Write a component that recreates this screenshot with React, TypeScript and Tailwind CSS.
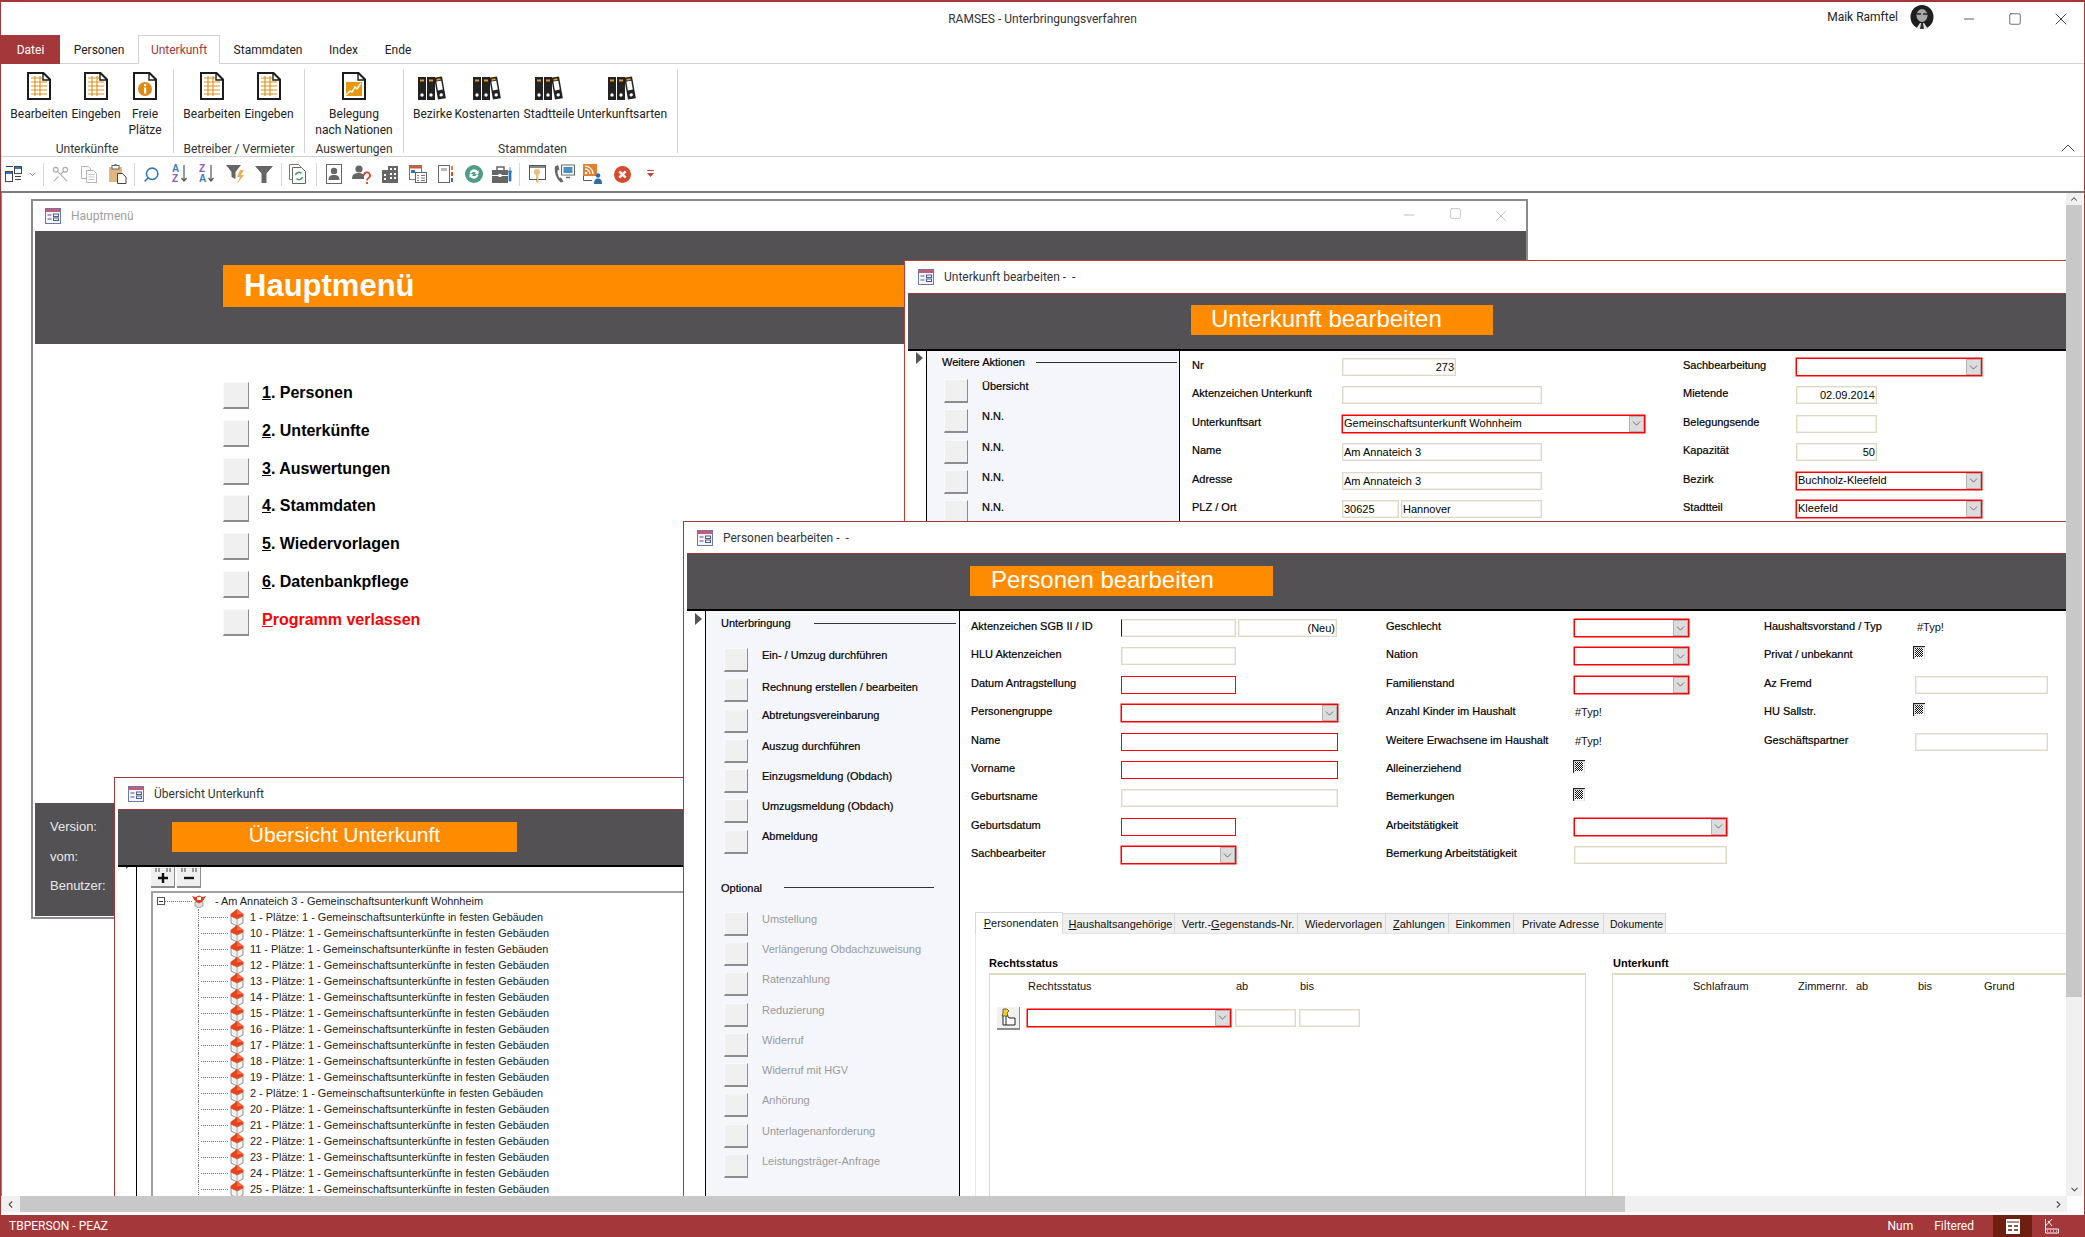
import type { ReactNode } from 'react';
import { ChevronDown, ChevronLeft, ChevronRight, ChevronUp, Minus, Scissors, Search, Square, X } from 'lucide-react';

// ---------- ribbon icons ----------
function Doc({ children }: { children?: ReactNode }) {
  return (
    <svg width="24" height="28" viewBox="0 0 24 28">
      <path d="M1 1h15.5L23 7.5V27H1z" fill="#fff" stroke="#1c1c1c" strokeWidth="2" />
      {children}
      <path d="M16 1v7h7z" fill="#fff" stroke="#1c1c1c" strokeWidth="1.4" />
    </svg>
  );
}

function DocLines() {
  return (
    <Doc>
      <path d="M4 6h11M4 10h16M4 14h16M4 18h16M4 22h16M8 4v20M13 4v20" stroke="#e08e1a" strokeWidth="1.1" fill="none" />
    </Doc>
  );
}

function DocInfo() {
  return (
    <Doc>
      <circle cx="12" cy="17" r="7" fill="#e08a12" />
      <rect x="11" y="15.5" width="2.2" height="6" fill="#fff" />
      <rect x="11" y="12" width="2.2" height="2.2" fill="#fff" />
    </Doc>
  );
}

function DocChart() {
  return (
    <Doc>
      <rect x="4" y="10" width="16" height="14" fill="#e8980f" />
      <path d="M4 23l4-4 2 1 3-5 2 2 4-6" stroke="#fff" strokeWidth="1.4" fill="none" />
    </Doc>
  );
}

function Binders() {
  return (
    <svg width="30" height="24" viewBox="0 0 30 24" className="ml-[1px]">
      <rect x="0" y="1" width="8" height="23" fill="#222" />
      <rect x="9" y="1" width="8" height="23" fill="#222" />
      <rect x="2" y="3.5" width="4" height="2" fill="#e89a1c" />
      <rect x="11" y="3.5" width="4" height="2" fill="#e89a1c" />
      <circle cx="4" cy="19" r="1.7" fill="#fff" />
      <circle cx="13" cy="19" r="1.7" fill="#fff" />
      <g transform="rotate(-10 22 12)">
        <rect x="18" y="1" width="8" height="22" fill="#222" />
        <rect x="19.5" y="5" width="5" height="9" fill="#fff" />
        <rect x="20" y="2.5" width="4" height="1.8" fill="#e89a1c" />
        <circle cx="22" cy="19" r="1.7" fill="#fff" />
      </g>
    </svg>
  );
}

function WinIcon() {
  return (
    <svg width="16" height="16" viewBox="0 0 16 16" className="shrink-0">
      <rect x="0.5" y="0.5" width="15" height="15" fill="#f4f6fc" stroke="#6b78a8" />
      <rect x="1" y="1" width="14" height="3" fill="#c65a78" />
      <path d="M2.5 7h4M2.5 11h4" stroke="#4a5a90" />
      <rect x="8.5" y="6" width="5" height="2.5" fill="none" stroke="#4a5a90" />
      <rect x="8.5" y="10" width="5" height="2.5" fill="none" stroke="#4a5a90" />
    </svg>
  );
}

function House() {
  return (
    <svg width="14" height="17" viewBox="0 0 14 17" className="shrink-0">
      <path d="M1 7v7l6 3 6-3V7l-6 3z" fill="#f2f2f2" stroke="#777" strokeWidth="0.8" />
      <path d="M7 10v7" stroke="#999" strokeWidth="0.8" />
      <path d="M7 0L13.5 5V7L7 10 0.5 7V5z" fill="#e9431c" />
      <path d="M7 0V5l6.5 0z" fill="#f0704a" />
    </svg>
  );
}

function RootHouse() {
  return (
    <svg width="14" height="14" viewBox="0 0 14 14" className="shrink-0">
      <path d="M3 8v4l4 2 4-2V8z" fill="#ddd" stroke="#888" strokeWidth="0.7" />
      <path d="M0 2l3.5 1L7 1.5 10.5 3 14 2 11 7 7 9.5 3 7z" fill="#e03c20" />
      <path d="M5 3h4v3H5z" fill="#fff" />
    </svg>
  );
}

function Check() {
  return (
    <svg width="12" height="13" viewBox="0 0 12 13" className="shrink-0 -ml-[1px] -mt-[1px]">
      <pattern id="chk" width="2" height="2" patternUnits="userSpaceOnUse">
        <rect width="2" height="2" fill="#fff" />
        <rect width="1" height="1" fill="#111" />
        <rect x="1" y="1" width="1" height="1" fill="#111" />
      </pattern>
      <rect x="2" y="2" width="8" height="9" fill="url(#chk)" />
      <path d="M0.5 13V0.5H12" stroke="#222" fill="none" strokeWidth="1.3" />
      <path d="M11.5 1v12H1" stroke="#ddd" fill="none" />
    </svg>
  );
}

function PlusMinus({ plus }: { plus?: boolean }) {
  return (
    <svg width="22" height="20" viewBox="0 0 22 20">
      <path d="M4 2v4M7 2v4M15 2v4M18 2v4" stroke="#444" strokeWidth="1" />
      <path d={plus ? 'M6 12h10M11 7v10' : 'M6 12h10'} stroke="#111" strokeWidth="2.4" />
    </svg>
  );
}

// ---------- quick access toolbar icons ----------
const QI = {
  layout: (
    <svg width="17" height="16" viewBox="0 0 17 16">
      <rect x="0.5" y="5.5" width="7" height="10" fill="#fff" stroke="#444" />
      <rect x="9.5" y="0.5" width="7" height="7" fill="#fff" stroke="#444" />
      <path d="M1 0.5h7M10 10.5h6M10 13.5h6" stroke="#444" />
      <rect x="1" y="6" width="6" height="2" fill="#2f78b8" />
      <rect x="10" y="1" width="6" height="2" fill="#2f78b8" />
    </svg>
  ),
  copy: (
    <svg width="16" height="17" viewBox="0 0 16 17">
      <path d="M0.5 0.5h7l2 2v10h-9z" fill="#fff" stroke="#b4b4b4" />
      <path d="M5.5 4.5h7l3 3v9h-10z" fill="#fff" stroke="#b4b4b4" />
      <path d="M7.5 8.5h6M7.5 11h6M7.5 13.5h6" stroke="#c4c4c4" />
    </svg>
  ),
  paste: (
    <svg width="18" height="20" viewBox="0 0 18 20">
      <rect x="0" y="3" width="13" height="15" fill="#e3b77c" />
      <rect x="3" y="1.5" width="7" height="3.5" fill="#fff" stroke="#666" />
      <rect x="5.5" y="0" width="2" height="2" fill="#666" />
      <path d="M8.5 9.5h5l3.5 3.5v6.5H8.5z" fill="#fff" stroke="#444" />
    </svg>
  ),
  filterBolt: (
    <svg width="20" height="22" viewBox="0 0 20 22">
      <path d="M0 2h15l-5.5 7v7l-4-2V9z" fill="#666" />
      <path d="M14 7l-3 7h3l-3 7 7-9h-3l3-5z" fill="#eeb155" />
    </svg>
  ),
  funnel: (
    <svg width="18" height="18" viewBox="0 0 18 18">
      <path d="M0 1h18l-6.5 7.5V18h-5V8.5z" fill="#666" />
    </svg>
  ),
  refreshDoc: (
    <svg width="18" height="20" viewBox="0 0 18 20">
      <path d="M0.5 0.5h9l2 2v2" fill="none" stroke="#777" />
      <path d="M0.5 0.5v15h3" fill="none" stroke="#777" />
      <path d="M3.5 3.5h9l4 4v12h-13z" fill="#fff" stroke="#666" />
      <path d="M6.5 11a3.5 3.5 0 0 1 6-1.5M13.5 13a3.5 3.5 0 0 1-6 1.5" stroke="#3d9a70" strokeWidth="1.6" fill="none" />
    </svg>
  ),
  person: (
    <svg width="16" height="20" viewBox="0 0 16 20">
      <rect x="0.5" y="0.5" width="15" height="19" fill="#fff" stroke="#666" />
      <circle cx="8" cy="7" r="3.2" fill="#666" />
      <path d="M2.5 16c0-4 2-5 5.5-5s5.5 1 5.5 5z" fill="#666" />
    </svg>
  ),
  personQ: (
    <svg width="20" height="20" viewBox="0 0 20 20">
      <circle cx="7" cy="5" r="3.6" fill="#666" />
      <path d="M0 15c0-4 2-6 7-6 3 0 4 1 5 2v4z" fill="#666" />
      <path d="M12 11.5a3 3 0 1 1 4.5 2.5c-1 .6-1.5 1-1.5 2.5M15 18v2" stroke="#d8442c" strokeWidth="1.8" fill="none" />
    </svg>
  ),
  building: (
    <svg width="16" height="17" viewBox="0 0 16 17">
      <rect x="0" y="4" width="16" height="13" fill="#666" />
      <rect x="6" y="0" width="10" height="6" fill="#666" />
      <path d="M8 2h2v2H8zM12 2h2v2h-2zM8 7h2v2H8zM12 7h2v2h-2zM8 11h2v2H8zM12 11h2v2h-2zM2 8h2v2H2zM2 12h2v2H2z" fill="#fff" />
    </svg>
  ),
  forms: (
    <svg width="18" height="18" viewBox="0 0 18 18">
      <rect x="0.5" y="0.5" width="12" height="14" fill="#fff" stroke="#777" />
      <rect x="1" y="1" width="11" height="2.5" fill="#d9582c" />
      <rect x="2" y="5" width="4" height="3" fill="#2f78b8" />
      <rect x="6.5" y="7.5" width="11" height="10" fill="#fff" stroke="#666" />
      <path d="M8 10.5h2M12 10.5h4M8 13h2M12 13h4M8 15.5h2M12 15.5h4" stroke="#777" />
    </svg>
  ),
  docSide: (
    <svg width="15" height="18" viewBox="0 0 15 18">
      <rect x="0.5" y="0.5" width="11" height="17" fill="#fff" stroke="#666" />
      <rect x="3" y="3" width="6" height="3" fill="#bbb" />
      <rect x="13" y="1" width="2" height="4" fill="#e0832a" />
      <rect x="13" y="7" width="2" height="4" fill="#d94a2a" />
      <rect x="13" y="13" width="2" height="4" fill="#2f78b8" />
    </svg>
  ),
  refresh: (
    <svg width="18" height="18" viewBox="0 0 18 18">
      <circle cx="9" cy="9" r="9" fill="#4d9c84" />
      <path d="M4.5 8a4.6 4.6 0 0 1 8-2l1-1v4h-4l1.5-1.2a2.8 2.8 0 0 0-4.7 1M13.5 10a4.6 4.6 0 0 1-8 2l-1 1V9h4l-1.5 1.2a2.8 2.8 0 0 0 4.7-1" fill="#fff" />
    </svg>
  ),
  briefcase: (
    <svg width="20" height="17" viewBox="0 0 20 17">
      <path d="M5 4V1h7v3" fill="none" stroke="#666" strokeWidth="1.5" />
      <rect x="0" y="4" width="16" height="13" fill="#666" />
      <rect x="0" y="9" width="16" height="1" fill="#fff" />
      <rect x="6.5" y="8" width="3" height="3" fill="#fff" />
      <path d="M18 1v4M16.5 5h3l-.5 2v8h-2V7z" fill="#2f78b8" stroke="#2f78b8" strokeWidth="0.8" />
    </svg>
  ),
  key: (
    <svg width="17" height="18" viewBox="0 0 17 18">
      <rect x="0.5" y="0.5" width="16" height="14" fill="#fff" stroke="#555" />
      <rect x="1" y="1" width="15" height="2" fill="#888" />
      <circle cx="8" cy="7" r="3" fill="#eebd7a" />
      <path d="M7 9h2.4v9H8l-1-1v-2h1v-1H7z" fill="#eebd7a" />
    </svg>
  ),
  phone: (
    <svg width="21" height="20" viewBox="0 0 21 20">
      <path d="M4 1L1 2.5C0 8 2 15 7 18.5L9.5 17.5 7 13.5 5.5 14C4 11.5 3.5 9 3.5 6.5L5.5 5.5z" fill="#666" />
      <rect x="7.5" y="1" width="13" height="10" fill="#fff" stroke="#666" />
      <rect x="9.5" y="3" width="9" height="6" fill="#4a90c8" />
      <path d="M12 13.5h4" stroke="#666" strokeWidth="1.4" />
    </svg>
  ),
  rss: (
    <svg width="20" height="20" viewBox="0 0 20 20">
      <rect x="0" y="0" width="14" height="12" fill="#e57f2e" />
      <circle cx="3" cy="9" r="1.3" fill="#fff" />
      <path d="M2 5a5 5 0 0 1 5 5M2 2a8 8 0 0 1 8 8" stroke="#fff" strokeWidth="1.3" fill="none" />
      <path d="M0.5 12v4.5H9" stroke="#555" fill="none" />
      <circle cx="15" cy="11.5" r="2.3" fill="#2f6da8" />
      <path d="M11 20c0-4 1.5-5.5 4-5.5s4 1.5 4 5.5z" fill="#2f6da8" />
    </svg>
  ),
  close: (
    <svg width="17" height="17" viewBox="0 0 17 17">
      <circle cx="8.5" cy="8.5" r="8.5" fill="#d8492d" />
      <path d="M5.3 5.3l6.4 6.4M11.7 5.3l-6.4 6.4" stroke="#fff" strokeWidth="2.4" />
    </svg>
  ),
  drop: (
    <svg width="7" height="8" viewBox="0 0 7 8">
      <path d="M0 0.5h7" stroke="#c9413c" />
      <path d="M0 3h7L3.5 7z" fill="#c9413c" />
    </svg>
  ),
};

function Sort({ first, second }: { first: ReactNode; second: ReactNode }) {
  return (
    <div className="flex w-[16px] h-[20px] font-['Liberation_Sans',sans-serif] text-[10px] font-bold leading-[10px]">
      <div className="flex flex-col">
        {first}
        {second}
      </div>
      <svg width="6" height="18" viewBox="0 0 6 18" className="ml-[2px]">
        <path d="M3 1v16M0.5 14L3 17l2.5-3" stroke="#555" fill="none" strokeWidth="1.2" />
      </svg>
    </div>
  );
}

function Q({ className, children }: { className: string; children?: ReactNode }) {
  return <div className={`h-full flex items-center justify-center shrink-0 ${className}`}>{children}</div>;
}

function QSep({ className }: { className: string }) {
  return (
    <div className={`h-full flex items-center justify-center shrink-0 ${className}`}>
      <div className="w-px h-[23px] bg-[#d8d8d8]" />
    </div>
  );
}

// ---------- ribbon ----------
function RibbonBtn({ className, icon, children }: { className: string; icon: ReactNode; children: ReactNode }) {
  return (
    <div className={`flex flex-col items-center shrink-0 ${className}`}>
      <div className="h-[27px] flex items-end">{icon}</div>
      <div className="mt-[6px] text-center leading-[16px] whitespace-nowrap text-[#222]">{children}</div>
    </div>
  );
}

function Group({ className, label, labelClass, children }: { className: string; label: string; labelClass?: string; children: ReactNode }) {
  return (
    <div className={`mt-[5px] h-[84px] flex flex-col border-r border-[#d4d4d4] shrink-0 ${className}`}>
      <div className="flex-1 flex pl-[10px] pt-[4px]">{children}</div>
      <div className={`h-[16px] leading-[16px] text-center -mb-[4px] text-[#333] ${labelClass ?? ''}`}>{label}</div>
    </div>
  );
}

// ---------- access form parts ----------
function AccessBtn({ className }: { className: string }) {
  return <div className={`shrink-0 bg-[#f0f0f0] border-t border-l border-t-[#fafafa] border-l-[#fafafa] border-r border-r-[#8c8c8c] border-b-2 border-b-[#8c8c8c] ${className}`} />;
}

function Input({ className, red, right, children }: { className: string; red?: boolean; right?: boolean; children?: ReactNode }) {
  return (
    <div className={`h-[18px] shrink-0 border leading-[16px] px-[1px] text-[11px] text-black whitespace-nowrap overflow-hidden ${red ? 'border-[#ff0000]' : 'border-[#dcdac4] shadow-[inset_0_0_0_0.5px_#e6e4d4]'} ${right ? 'text-right' : ''} ${className}`}>
      {children}
    </div>
  );
}

function Combo({ className, children }: { className: string; children?: ReactNode }) {
  return (
    <div className={`h-[18px] shrink-0 border border-[#ff0000] shadow-[0_0_0_0.5px_#ff0000] flex items-stretch text-[11px] text-black leading-[15px] ${className}`}>
      <div className="flex-1 pl-[1px] whitespace-nowrap overflow-hidden">{children}</div>
      <div className="w-[15px] bg-[#dcdcdc] border border-[#b4b4b4] flex items-center justify-center">
        <ChevronDown size={13} strokeWidth={1.3} color="#444" />
      </div>
    </div>
  );
}

const LABEL = 'text-black [-webkit-text-stroke:0.2px_#000]';

function Row({ label, labelClass, children }: { label: string; labelClass: string; children?: ReactNode }) {
  return (
    <div className="flex h-[28.4px]">
      <div className={`shrink-0 leading-[15px] whitespace-nowrap ${LABEL} ${labelClass}`}>{label}</div>
      {children}
    </div>
  );
}

function SideRow({ label, muted, labelClass }: { label: string; muted?: boolean; labelClass?: string }) {
  return (
    <div className="flex h-[30.25px]">
      <AccessBtn className="w-[24px] h-[24px]" />
      <div className={`ml-[14px] leading-[14px] whitespace-nowrap ${muted ? 'text-[#9a9a9a]' : LABEL} ${labelClass ?? ''}`}>{label}</div>
    </div>
  );
}

function Triangle() {
  return (
    <svg width="7" height="12" viewBox="0 0 7 12">
      <path d="M0 0l7 6-7 6z" fill="#555" />
    </svg>
  );
}

function TitleBar({ title, muted, className }: { title: string; muted?: boolean; className: string }) {
  return (
    <div className={`flex items-center font-[Roboto,sans-serif] text-[12px] shrink-0 ${muted ? 'text-[#9e9e9e]' : 'text-[#333]'} ${className}`}>
      <WinIcon />
      <span className="ml-[10px] whitespace-pre">{title}</span>
    </div>
  );
}

function Tab({ className, children }: { className: string; children: ReactNode }) {
  return (
    <div className={`h-[20px] shrink-0 bg-[#f0f0f0] border-r border-t border-[#d8d8d8] text-center leading-[21px] whitespace-nowrap pl-[4px] ${className}`}>
      {children}
    </div>
  );
}

const treeRows = ['1', '10', '11', '12', '13', '14', '15', '16', '17', '18', '19', '2', '20', '21', '22', '23', '24', '25'];

export default function App() {
  return (
    <div className="w-[2085px] h-[1237px] overflow-hidden bg-white flex flex-col border-x border-t-2 border-[#a4373a] font-[Roboto,sans-serif] text-[12px] text-[#222]">
      {/* title */}
      <div className="h-[33px] shrink-0 grid grid-cols-[1fr_auto_1fr] items-center">
        <div />
        <div className="text-[#333] mt-[1px]">RAMSES - Unterbringungsverfahren</div>
        <div className="flex items-center justify-end h-full">
          <span className="text-[#222] -mt-[3px]">Maik Ramftel</span>
          <svg width="24" height="24" viewBox="0 0 24 24" className="ml-[12px] mr-[12px] -mt-[3px]">
            <ellipse cx="12" cy="12" rx="11.5" ry="12" fill="#1f1f1f" />
            <ellipse cx="12" cy="10.5" rx="5.5" ry="6.5" fill="#a8a8a8" />
            <path d="M7 9h4M13 9h4" stroke="#222" strokeWidth="1.4" />
            <path d="M6 24l4-6h4l4 6z" fill="#e6e6e6" />
            <path d="M11 18h2l1 6h-4z" fill="#333" />
          </svg>
          <div className="w-[46px] flex justify-center"><Minus size={16} strokeWidth={1.1} /></div>
          <div className="w-[46px] flex justify-center"><Square size={14} strokeWidth={1.1} /></div>
          <div className="w-[46px] flex justify-center"><X size={20} strokeWidth={1} /></div>
        </div>
      </div>

      {/* ribbon tabs */}
      <div className="h-[29px] shrink-0 flex border-b border-[#d2d2d2] leading-[31px] text-center">
        <div className="w-[59px] h-[29px] bg-[#a4373a] text-white">Datei</div>
        <div className="w-[78px]">Personen</div>
        <div className="w-[82px] h-[29px] bg-white border-x border-t border-[#d2d2d2] text-[#a4373a] leading-[29px]">Unterkunft</div>
        <div className="w-[96px]">Stammdaten</div>
        <div className="w-[55px]">Index</div>
        <div className="w-[54px]">Ende</div>
      </div>

      {/* ribbon */}
      <div className="h-[93px] shrink-0 flex border-b border-[#d2d2d2]">
        <Group className="w-[173px]" label="Unterkünfte">
          <RibbonBtn className="w-[56px]" icon={<DocLines />}>Bearbeiten</RibbonBtn>
          <RibbonBtn className="w-[58px]" icon={<DocLines />}>Eingeben</RibbonBtn>
          <RibbonBtn className="w-[40px]" icon={<DocInfo />}>Freie<br />Plätze</RibbonBtn>
        </Group>
        <Group className="w-[131px]" label="Betreiber / Vermieter">
          <RibbonBtn className="w-[56px]" icon={<DocLines />}>Bearbeiten</RibbonBtn>
          <RibbonBtn className="w-[58px]" icon={<DocLines />}>Eingeben</RibbonBtn>
        </Group>
        <Group className="w-[99px]" label="Auswertungen">
          <RibbonBtn className="w-[78px]" icon={<DocChart />}>Belegung<br />nach Nationen</RibbonBtn>
        </Group>
        <Group className="w-[274px]" label="Stammdaten" labelClass="pr-[16px]">
          <RibbonBtn className="w-[37px]" icon={<Binders />}>Bezirke</RibbonBtn>
          <RibbonBtn className="w-[72px]" icon={<Binders />}>Kostenarten</RibbonBtn>
          <RibbonBtn className="w-[52px]" icon={<Binders />}>Stadtteile</RibbonBtn>
          <RibbonBtn className="w-[94px]" icon={<Binders />}>Unterkunftsarten</RibbonBtn>
        </Group>
        <div className="ml-auto mr-[4px] mt-[72px]"><ChevronUp size={24} strokeWidth={1} color="#444" /></div>
      </div>

      {/* quick access toolbar */}
      <div className="h-[34px] shrink-0 flex items-center">
        <Q className="w-[24px]">{QI.layout}</Q>
        <Q className="w-[14px]"><ChevronDown size={9} strokeWidth={2} color="#555" /></Q>
        <QSep className="w-[8px]" />
        <Q className="w-[27px]"><Scissors size={19} strokeWidth={1.4} color="#aaa" className="rotate-90" /></Q>
        <Q className="w-[29px]">{QI.copy}</Q>
        <Q className="w-[30px]">{QI.paste}</Q>
        <QSep className="w-[2px]" />
        <Q className="w-[32px]"><Search size={17} strokeWidth={2.2} color="#2f78b8" className="-scale-x-100" /></Q>
        <Q className="w-[26px]"><Sort first={<span className="text-[#3a80c0]">A</span>} second={<span className="text-[#8a5ab8]">Z</span>} /></Q>
        <Q className="w-[28px]"><Sort first={<span className="text-[#8a5ab8]">Z</span>} second={<span className="text-[#3a80c0]">A</span>} /></Q>
        <Q className="w-[29px]">{QI.filterBolt}</Q>
        <Q className="w-[28px]">{QI.funnel}</Q>
        <QSep className="w-[6px]" />
        <Q className="w-[28px]">{QI.refreshDoc}</Q>
        <QSep className="w-[8px]" />
        <Q className="w-[28px]">{QI.person}</Q>
        <Q className="w-[27px]">{QI.personQ}</Q>
        <Q className="w-[29px]">{QI.building}</Q>
        <Q className="w-[28px]">{QI.forms}</Q>
        <Q className="w-[27px]">{QI.docSide}</Q>
        <Q className="w-[30px]">{QI.refresh}</Q>
        <Q className="w-[26px]">{QI.briefcase}</Q>
        <QSep className="w-[8px]" />
        <Q className="w-[28px]">{QI.key}</Q>
        <Q className="w-[27px]">{QI.phone}</Q>
        <Q className="w-[30px]">{QI.rss}</Q>
        <Q className="w-[28px]">{QI.close}</Q>
        <Q className="w-[28px]">{QI.drop}</Q>
      </div>

      {/* mdi area */}
      <div className="h-[1021px] shrink-0 flex flex-col border-t-2 border-[#7c7c7c]">
        <div className="flex h-[1003px] shrink-0">
          <div className="relative w-[2065px] shrink-0 overflow-hidden border-l border-[#8a8a8a] font-['Liberation_Sans',Arial,sans-serif] text-[11px] text-[#111]">
            {/* Hauptmenü */}
            <div className="absolute left-[29px] top-[6px] w-[1497px] h-[720px] bg-white border-2 border-[#8a8a8a] flex flex-col">
              <div className="relative flex items-center">
                <TitleBar title="Hauptmenü" muted className="h-[30px] pl-[12px] flex-1" />
                <div className="flex text-[#a4a4a4] mr-[2px]">
                  <div className="w-[46px] flex justify-center"><Minus size={16} strokeWidth={1.1} /></div>
                  <div className="w-[46px] flex justify-center"><Square size={13} strokeWidth={1.1} /></div>
                  <div className="w-[46px] flex justify-center"><X size={18} strokeWidth={1} /></div>
                </div>
              </div>
              <div className="ml-[2px] h-[113px] shrink-0 bg-[#545154] pl-[188px] pt-[34px]">
                <div className="w-[1000px] h-[42px] bg-[#ff8c00] pl-[21px] text-[31px] leading-[41px] font-bold text-white">Hauptmenü</div>
              </div>
              <div className="ml-[190px] mt-[38px] flex flex-col text-[16px] font-bold leading-[22px] text-black">
                {[['1', '. Personen'], ['2', '. Unterkünfte'], ['3', '. Auswertungen'], ['4', '. Stammdaten'], ['5', '. Wiedervorlagen'], ['6', '. Datenbankpflege']].map(([k, t]) => (
                  <div key={k} className="flex h-[37.75px]">
                    <AccessBtn className="w-[26px] h-[27px]" />
                    <div className="ml-[13px]"><span className="underline">{k}</span>{t}</div>
                  </div>
                ))}
                <div className="flex h-[37.75px]">
                  <AccessBtn className="w-[26px] h-[27px]" />
                  <div className="ml-[13px] text-[#ff0000]"><span className="underline">P</span>rogramm verlassen</div>
                </div>
              </div>
              <div className="mt-auto ml-[2px] mb-px h-[113px] shrink-0 bg-[#545154] pl-[15px] pt-[15px] text-[13px] text-[#e8e8e8]">
                <div className="h-[29.5px] leading-[18px]">Version:</div>
                <div className="h-[29.5px] leading-[18px]">vom:</div>
                <div className="h-[29.5px] leading-[18px]">Benutzer:</div>
              </div>
            </div>

            {/* Übersicht Unterkunft */}
            <div className="absolute isolate left-[112px] top-[584px] w-[600px] h-[500px] bg-white border border-[#a4373a] flex flex-col">
              <TitleBar title="Übersicht Unterkunft" className="h-[31px] pl-[13px]" />
              <div className="relative z-10 ml-[3px] h-[58px] shrink-0 bg-[#545154] border-t border-[#a4373a] border-b-2 border-b-black pl-[54px] pt-[12px]">
                <div className="w-[345px] h-[30px] bg-[#ff8c00] text-center text-[21px] leading-[26px] text-white">Übersicht Unterkunft</div>
              </div>
              <div className="flex flex-1 ml-[3px] -mt-[2px]">
                <div className="w-[18px] pl-[8px] shrink-0 -mt-[8px]"><Triangle /></div>
                <div className="flex-1 border-l border-black pl-[14px]">
                  <div className="flex h-[23px]">
                    <div className="w-[24px] h-[23px] bg-[#f0f0f0] border-r border-b-2 border-[#8c8c8c] flex items-center justify-center"><PlusMinus plus /></div>
                    <div className="ml-[2px] w-[24px] h-[23px] bg-[#f0f0f0] border-r border-b-2 border-[#8c8c8c] flex items-center justify-center"><PlusMinus /></div>
                  </div>
                  <div className="mt-[3px] h-[400px] border-t-2 border-l-2 border-[#a0a0a0] text-[10.9px] text-[#222]">
                    <div className="flex items-center h-[16px]">
                      <div className="ml-[4px] w-[8px] h-[8px] border border-[#555] flex items-center justify-center shrink-0"><div className="w-[4px] h-px bg-[#333]" /></div>
                      <div className="w-[27px] border-t border-dotted border-[#777]" />
                      <RootHouse />
                      <span className="ml-[9px] whitespace-nowrap">- Am Annateich 3 - Gemeinschaftsunterkunft Wohnheim</span>
                    </div>
                    {treeRows.map((n) => (
                      <div key={n} className="flex items-center h-[16px] ml-[45px] border-l border-dotted border-[#777]">
                        <div className="ml-[2px] w-[27px] border-t border-dotted border-[#777]" />
                        <div className="ml-[2px]"><House /></div>
                        <span className="ml-[6px] whitespace-nowrap">{n} - Plätze: 1 - Gemeinschaftsunterkünfte in festen Gebäuden</span>
                      </div>
                    ))}
                  </div>
                </div>
              </div>
            </div>

            {/* Unterkunft bearbeiten */}
            <div className="absolute left-[902px] top-[67px] w-[1200px] h-[400px] bg-white border border-[#c0393b] flex flex-col">
              <TitleBar title="Unterkunft bearbeiten -  -" className="h-[32px] pl-[13px]" />
              <div className="ml-[3px] h-[58px] shrink-0 bg-[#545154] border-t border-[#a4373a] border-b-2 border-b-black pl-[283px] pt-[11px]">
                <div className="w-[302px] h-[30px] bg-[#ff8c00] pl-[20px] text-[24px] leading-[28px] text-white">Unterkunft bearbeiten</div>
              </div>
              <div className="flex flex-1 ml-[3px]">
                <div className="w-[18px] pl-[8px] pt-[1px] shrink-0"><Triangle /></div>
                <div className="w-[254px] shrink-0 bg-[#f4f6fb] border-x border-black pt-[4px] pl-[15px]">
                  <div className="flex items-center h-[14px]">
                    <div className={`w-[94px] ${LABEL}`}>Weitere Aktionen</div>
                    <div className="w-[141px] h-px bg-[#333]" />
                  </div>
                  <div className="mt-[10px] ml-[2px]">
                    <SideRow label="Übersicht" />
                    <SideRow label="N.N." />
                    <SideRow label="N.N." />
                    <SideRow label="N.N." />
                    <SideRow label="N.N." />
                  </div>
                </div>
                <div className="flex pl-[12px] pt-[7px]">
                  <div className="w-[491px]">
                    <Row label="Nr" labelClass="w-[150px]"><Input className="w-[114px]" right>273</Input></Row>
                    <Row label="Aktenzeichen Unterkunft" labelClass="w-[150px]"><Input className="w-[200px]" /></Row>
                    <Row label="Unterkunftsart" labelClass="w-[150px]"><Combo className="w-[303px]">Gemeinschaftsunterkunft Wohnheim</Combo></Row>
                    <Row label="Name" labelClass="w-[150px]"><Input className="w-[200px]">Am Annateich 3</Input></Row>
                    <Row label="Adresse" labelClass="w-[150px]"><Input className="w-[200px]">Am Annateich 3</Input></Row>
                    <Row label="PLZ / Ort" labelClass="w-[150px]">
                      <Input className="w-[57px]">30625</Input>
                      <Input className="w-[141px] ml-[2px]">Hannover</Input>
                    </Row>
                  </div>
                  <div>
                    <Row label="Sachbearbeitung" labelClass="w-[113px]"><Combo className="w-[186px]" /></Row>
                    <Row label="Mietende" labelClass="w-[113px]"><Input className="w-[81px]" right>02.09.2014</Input></Row>
                    <Row label="Belegungsende" labelClass="w-[113px]"><Input className="w-[81px]" /></Row>
                    <Row label="Kapazität" labelClass="w-[113px]"><Input className="w-[81px]" right>50</Input></Row>
                    <Row label="Bezirk" labelClass="w-[113px]"><Combo className="w-[186px]">Buchholz-Kleefeld</Combo></Row>
                    <Row label="Stadtteil" labelClass="w-[113px]"><Combo className="w-[186px]">Kleefeld</Combo></Row>
                  </div>
                </div>
              </div>
            </div>

            {/* Personen bearbeiten */}
            <div className="absolute left-[681px] top-[328px] w-[1420px] h-[720px] bg-white border border-[#a4373a] flex flex-col">
              <TitleBar title="Personen bearbeiten -  -" className="h-[31px] pl-[13px]" />
              <div className="ml-[3px] h-[58px] shrink-0 bg-[#545154] border-t border-[#a4373a] border-b-2 border-b-black pl-[283px] pt-[12px]">
                <div className="w-[303px] h-[30px] bg-[#ff8c00] pl-[21px] text-[24px] leading-[28px] text-white">Personen bearbeiten</div>
              </div>
              <div className="flex flex-1 ml-[3px]">
                <div className="w-[18px] pl-[8px] pt-[2px] shrink-0"><Triangle /></div>
                <div className="w-[255px] shrink-0 bg-[#f4f6fb] border-x border-black pt-[5px] pl-[15px]">
                  <div className="flex items-center h-[14px]">
                    <div className={`w-[93px] ${LABEL}`}>Unterbringung</div>
                    <div className="w-[142px] h-px bg-[#333]" />
                  </div>
                  <div className="mt-[18px] ml-[3px]">
                    <SideRow label="Ein- / Umzug durchführen" />
                    <SideRow label="Rechnung erstellen / bearbeiten" labelClass="mt-[2px]" />
                    <SideRow label="Abtretungsvereinbarung" labelClass="-mt-[1px]" />
                    <SideRow label="Auszug durchführen" />
                    <SideRow label="Einzugsmeldung (Obdach)" />
                    <SideRow label="Umzugsmeldung (Obdach)" />
                    <SideRow label="Abmeldung" labelClass="-mt-[1px]" />
                  </div>
                  <div className="flex items-center h-[14px] mt-[21px]">
                    <div className={`w-[63px] ${LABEL}`}>Optional</div>
                    <div className="w-[150px] h-px bg-[#333]" />
                  </div>
                  <div className="mt-[17px] ml-[3px]">
                    {['Umstellung', 'Verlängerung Obdachzuweisung', 'Ratenzahlung', 'Reduzierung', 'Widerruf', 'Widerruf mit HGV', 'Anhörung', 'Unterlagenanforderung', 'Leistungsträger-Anfrage'].map((t) => (
                      <SideRow key={t} label={t} muted />
                    ))}
                  </div>
                </div>
                <div className="flex-1 flex flex-col">
                  <div className="flex pl-[11px] pt-[8px]">
                    <div className="w-[415px]">
                      <Row label="Aktenzeichen SGB II / ID" labelClass="w-[150px]">
                        <Input className="w-[115px] !border-l-[#222]" />
                        <Input className="w-[99px] ml-[2px]" right>(Neu)</Input>
                      </Row>
                      <Row label="HLU Aktenzeichen" labelClass="w-[150px]"><Input className="w-[115px]" /></Row>
                      <Row label="Datum Antragstellung" labelClass="w-[150px]"><Input className="w-[115px]" red /></Row>
                      <Row label="Personengruppe" labelClass="w-[150px]"><Combo className="w-[217px]" /></Row>
                      <Row label="Name" labelClass="w-[150px]"><Input className="w-[217px]" red /></Row>
                      <Row label="Vorname" labelClass="w-[150px]"><Input className="w-[217px]" red /></Row>
                      <Row label="Geburtsname" labelClass="w-[150px]"><Input className="w-[217px]" /></Row>
                      <Row label="Geburtsdatum" labelClass="w-[150px]"><Input className="w-[115px]" red /></Row>
                      <Row label="Sachbearbeiter" labelClass="w-[150px]"><Combo className="w-[115px]" /></Row>
                    </div>
                    <div className="w-[378px]">
                      <Row label="Geschlecht" labelClass="w-[188px]"><Combo className="w-[115px]" /></Row>
                      <Row label="Nation" labelClass="w-[188px]"><Combo className="w-[115px]" /></Row>
                      <Row label="Familienstand" labelClass="w-[188px]"><Combo className="w-[115px]" /></Row>
                      <Row label="Anzahl Kinder im Haushalt" labelClass="w-[188px]"><div className="ml-[1px] leading-[17px]">#Typ!</div></Row>
                      <Row label="Weitere Erwachsene im Haushalt" labelClass="w-[188px]"><div className="ml-[1px] leading-[17px]">#Typ!</div></Row>
                      <Row label="Alleinerziehend" labelClass="w-[188px]"><Check /></Row>
                      <Row label="Bemerkungen" labelClass="w-[188px]"><Check /></Row>
                      <Row label="Arbeitstätigkeit" labelClass="w-[188px]"><Combo className="w-[153px]" /></Row>
                      <Row label="Bemerkung Arbeitstätigkeit" labelClass="w-[188px]"><Input className="w-[153px]" /></Row>
                    </div>
                    <div>
                      <Row label="Haushaltsvorstand / Typ" labelClass="w-[151px]"><div className="ml-[2px] leading-[17px]">#Typ!</div></Row>
                      <Row label="Privat / unbekannt" labelClass="w-[150px]"><Check /></Row>
                      <Row label="Az Fremd" labelClass="w-[151px]"><Input className="w-[133px]" /></Row>
                      <Row label="HU Sallstr." labelClass="w-[150px]"><Check /></Row>
                      <Row label="Geschäftspartner" labelClass="w-[151px]"><Input className="w-[133px]" /></Row>
                    </div>
                  </div>

                  {/* tabs */}
                  <div className="mt-[37px] ml-[15px] flex items-end h-[22px] shrink-0 border-b border-[#e6e6e6]">
                    <div className="w-[88px] h-[22px] bg-white border-x border-t border-[#d8d8d8] text-center leading-[21px] -mb-px pl-[4px]"><span className="underline">P</span>ersonendaten</div>
                    <Tab className="w-[112px]"><span className="underline">H</span>aushaltsangehörige</Tab>
                    <Tab className="w-[123px]">Vertr.-<span className="underline">G</span>egenstands-Nr.</Tab>
                    <Tab className="w-[88px]">Wiedervorlagen</Tab>
                    <Tab className="w-[63px]"><span className="underline">Z</span>ahlungen</Tab>
                    <Tab className="w-[65px] text-[10.4px]">Einkommen</Tab>
                    <Tab className="w-[90px]">Private Adresse</Tab>
                    <Tab className="w-[62px] text-[10.4px]">Dokumente</Tab>
                  </div>
                  <div className="flex-1 ml-[15px] border-l border-[#e8e8e8] pl-[13px] pt-[22px] flex">
                    <div className="w-[597px] shrink-0 flex flex-col">
                      <div className="h-[14px] leading-[14px] font-bold text-black">Rechtsstatus</div>
                      <div className="mt-[3px] flex-1 border-x border-t-2 border-[#dcdac4] pt-[4px]">
                        <div className="flex h-[14px] leading-[14px]">
                          <div className="ml-[38px] w-[208px]">Rechtsstatus</div>
                          <div className="w-[64px]">ab</div>
                          <div>bis</div>
                        </div>
                        <div className="flex mt-[14px]">
                          <div className="ml-[7px] w-[23px] h-[23px] bg-[#f0f0f0] border-r border-b-2 border-[#8c8c8c] flex items-center justify-center shrink-0">
                            <svg width="16" height="18" viewBox="0 0 16 18">
                              <path d="M3 7h4l2 3h6v7H3z" fill="#fff" stroke="#222" />
                              <path d="M6 8v9" stroke="#222" />
                              <path d="M3 1h4l2 2-2 2 1 3H2l1-3z" fill="#f5d020" stroke="#333" strokeWidth="0.7" />
                            </svg>
                          </div>
                          <Combo className="ml-[7px] mt-[2px] w-[204px]" />
                          <Input className="ml-[4px] mt-[2px] w-[61px]" />
                          <Input className="ml-[3px] mt-[2px] w-[61px]" />
                        </div>
                      </div>
                    </div>
                    <div className="ml-[26px] flex-1 flex flex-col">
                      <div className="h-[14px] leading-[14px] font-bold text-black pl-px">Unterkunft</div>
                      <div className="mt-[3px] flex-1 border-l border-t-2 border-[#dcdac4] pt-[4px]">
                        <div className="flex h-[14px] leading-[14px] pl-[80px]">
                          <div className="w-[105px]">Schlafraum</div>
                          <div className="w-[58px]">Zimmernr.</div>
                          <div className="w-[62px]">ab</div>
                          <div className="w-[66px]">bis</div>
                          <div>Grund</div>
                        </div>
                      </div>
                    </div>
                  </div>
                </div>
              </div>
            </div>
          </div>

          {/* vertical scrollbar */}
          <div className="w-[16px] shrink-0 bg-[#f0f0f0] flex flex-col items-center">
            <div className="h-[12px] shrink-0 flex items-center"><ChevronUp size={10} strokeWidth={2.5} color="#555" /></div>
            <div className="w-full h-[792px] shrink-0 bg-[#c8c8c8]" />
            <div className="mt-auto h-[14px] flex items-center"><ChevronDown size={11} strokeWidth={2.5} color="#555" /></div>
          </div>
        </div>

        {/* horizontal scrollbar */}
        <div className="h-[16px] shrink-0 flex bg-[#f0f0f0] w-[2066px]">
          <div className="w-[19px] flex items-center justify-center shrink-0"><ChevronLeft size={11} strokeWidth={2.5} color="#555" /></div>
          <div className="w-[1605px] bg-[#c8c8c8] shrink-0" />
          <div className="ml-auto w-[18px] flex items-center justify-center"><ChevronRight size={11} strokeWidth={2.5} color="#555" /></div>
        </div>
      </div>

      {/* status bar */}
      <div className="mt-auto h-[22px] shrink-0 bg-[#a4373a] text-white flex items-center">
        <div className="ml-[8px]">TBPERSON - PEAZ</div>
        <div className="ml-auto">Num</div>
        <div className="ml-[21px]">Filtered</div>
        <div className="ml-[19px] w-[39px] h-full bg-[#6e1f10] flex items-center justify-center">
          <svg width="14" height="15" viewBox="0 0 14 15">
            <rect width="14" height="15" fill="#fff" />
            <path d="M1 3h12" stroke="#6e1f10" strokeWidth="1" />
            <path d="M2 7h4M8 7h4M2 11h4M8 11h4" stroke="#6e1f10" strokeWidth="1.5" />
          </svg>
        </div>
        <div className="w-[40px] h-full flex items-center justify-center mr-[12px]">
          <svg width="16" height="16" viewBox="0 0 16 16">
            <path d="M1.5 1v10h13v4h-13zM1.5 8L8 1M4 3l4 5" stroke="#fff" fill="none" strokeWidth="1" />
            <path d="M3 13h1M6 13h1M9 13h1M12 13h1" stroke="#fff" />
          </svg>
        </div>
      </div>
    </div>
  );
}
